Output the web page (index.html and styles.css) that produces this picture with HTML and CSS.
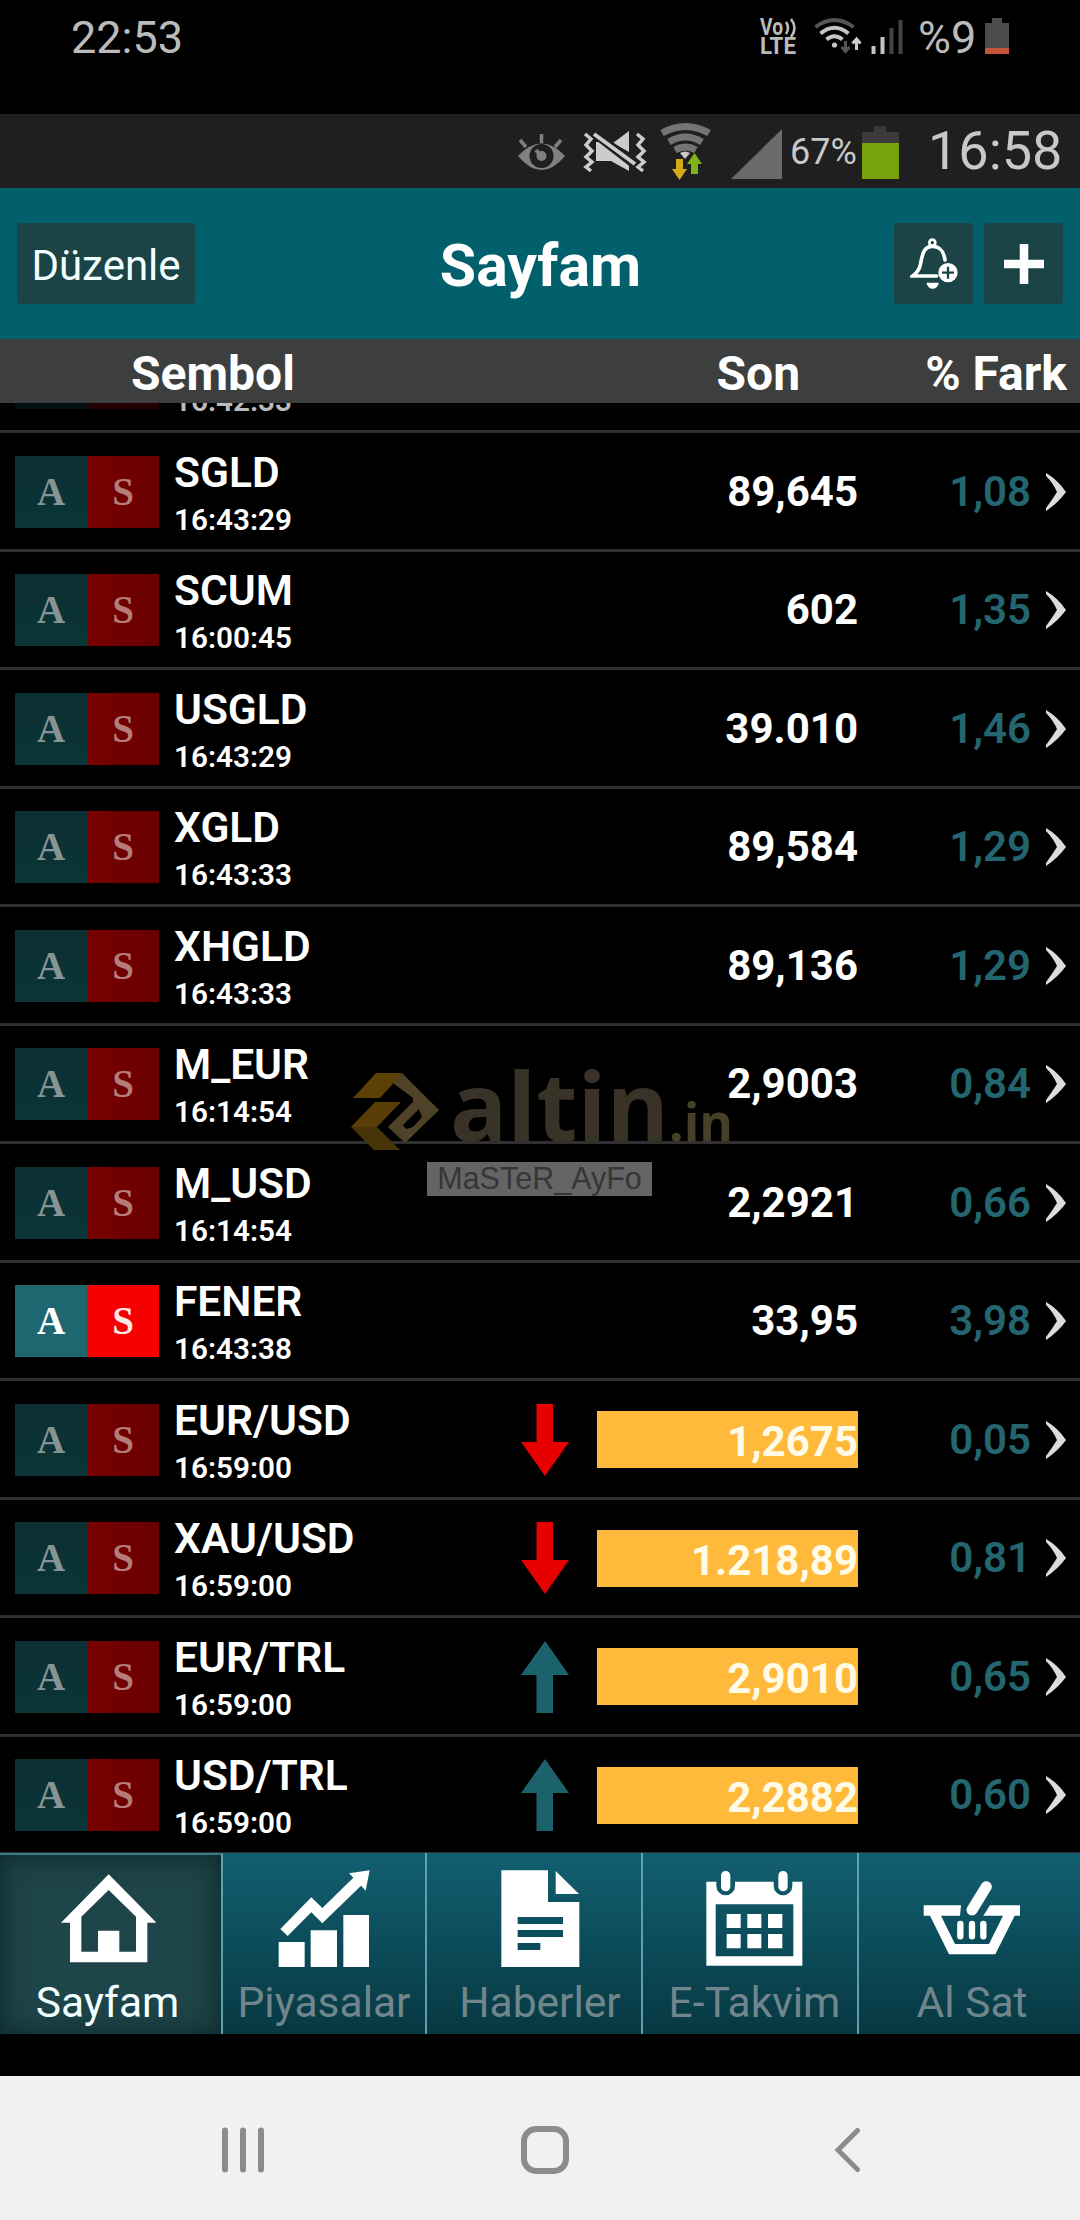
FILE: index.html
```html
<!DOCTYPE html>
<html lang="tr">
<head>
  <meta charset="UTF-8" />
  <meta name="viewport" content="width=device-width, initial-scale=1.0"/>
  <title>Sayfam</title>
  <link rel="stylesheet" href="styles.css">
</head>
<body>

  <!-- shared icons -->
  <svg class="sprite" xmlns="http://www.w3.org/2000/svg">
    <symbol id="chevron" viewBox="0 0 20 38">
      <path d="M0 0 Q12 7 20 19 Q12 30 0 38 L0 35 Q6 27 11 19 Q7 10 0 3 Z" fill="#dcdcdc"/>
    </symbol>
    <symbol id="down" viewBox="0 0 48 72">
      <path d="M15.500 0 H32 V38 H48 L24 72 L0 38 H15.500 Z" fill="#e60000"/>
    </symbol>
    <symbol id="up" viewBox="0 0 48 72">
      <path d="M24 0 L48 34 H32 V72 H15.500 V34 H0 Z" fill="#1c626d"/>
    </symbol>
  </svg>

  <div class="phone-status">
    <span class="clock">22:53</span>
    <svg class="phone-icons" width="160" height="60" viewBox="755 0 160 60">
      <text x="760" y="35" class="volte" textLength="23" lengthAdjust="spacingAndGlyphs">Vo</text>
      <path d="M786 22 Q790 28 786 34 M791 19 Q798 28 791 37" fill="none" stroke="#bbb" stroke-width="2.600"/>
      <text x="760" y="54" class="volte" textLength="36" lengthAdjust="spacingAndGlyphs">LTE</text>
      <g fill="none" stroke-width="4">
        <path d="M815.500 27 Q834.500 13 853.500 27" stroke="#555"/>
        <path d="M820.500 33.500 Q834.500 22 848.500 33.500" stroke="#c4c4c4"/>
        <path d="M826.500 39.500 Q834.500 33 842.500 39.500" stroke="#c4c4c4"/>
        <path d="M845.500 41 V51 M841.500 47 L845.500 51.500 L849.500 47" stroke="#555" stroke-width="3"/>
        <path d="M856.500 50 V40 M852.500 43.500 L856.500 39 L860.500 43.500" stroke="#ccc" stroke-width="3"/>
      </g>
      <circle cx="834.500" cy="45" r="2.600" fill="#c4c4c4"/>
      <path d="M871.500 46 h4 v8 h-4 Z M880.500 37 h4 v17 h-4 Z" fill="#c4c4c4"/>
      <path d="M889.500 28 h4 v26 h-4 Z M898.500 20 h4 v34 h-4 Z" fill="#444"/>
    </svg>
    <span class="battery-text">%9</span>
    <svg class="battery" width="24" height="36" viewBox="0 0 24 36">
      <path d="M7 0 H17 V5 H24 V36 H0 V5 H7 Z" fill="#4c4c4c"/>
      <path d="M0 30 H24 V36 H0 Z" fill="#c4543a"/>
    </svg>
  </div>

  <div class="app-status">
    <svg class="app-icons" width="270" height="74" viewBox="515 114 270 74">
      <path d="M518 156 Q541.500 131 565 156 Q541.500 184 518 156 Z" fill="#808080"/>
      <circle cx="541.500" cy="156" r="12" fill="#1f1f1f"/>
      <circle cx="541.500" cy="156" r="5" fill="#808080"/>
      <path d="M536 150 L541 156" stroke="#808080" stroke-width="4"/>
      <path d="M520 140 L526 147 M541.500 134 V143 M561 140 L555 147" stroke="#808080" stroke-width="3.500"/>
      <g stroke="#ccc" fill="none" stroke-width="3.500">
        <path d="M585 134 l6 5 l-5 6 l6 6 l-6 6 l6 5 l-6 5 l5 4"/>
        <path d="M637 134 l6 5 l-5 6 l6 6 l-6 6 l6 5 l-6 5 l5 4"/>
      </g>
      <path d="M596 142 H602 L629 164 V171 L611 161 H596 Z M613 143 L629 131 V152 Z" fill="#ccc"/>
      <path d="M594 133 L634 164" stroke="#1f1f1f" stroke-width="9"/>
      <path d="M594 134 L635 164" stroke="#ccc" stroke-width="4"/>
      <g fill="none" stroke="#747474" stroke-width="7">
        <path d="M662 133 Q685.500 120 709 133"/>
        <path d="M669 142 Q685.500 132 702 142"/>
        <path d="M675 150 Q685.500 144 696 150"/>
      </g>
      <path d="M680 153 Q685 150 690 153 L685 159 Z" fill="#d0c8c8"/>
      <path d="M676 159 H683 V169 H687 L679.500 180 L672 169 H676 Z" fill="#d3aa18"/>
      <path d="M694.500 153 L702 164 H698 V174 H691 V164 H687 Z" fill="#80b51a"/>
      <path d="M731 179 L782 129 V179 Z" fill="#6a6a6a"/>
    </svg>
    <span class="app-percent">67%</span>
    <svg class="app-battery" width="37" height="53" viewBox="0 0 37 53">
      <path d="M12 0 H24 V6 H37 V17 H0 V6 H12 Z" fill="#3a3a3a"/>
      <path d="M0 17 H37 V53 H0 Z" fill="#76a30c"/>
    </svg>
    <span class="app-clock">16:58</span>
  </div>

  <header class="header">
    <button class="btn btn-edit">Düzenle</button>
    <h1>Sayfam</h1>
    <div class="header-actions">
      <button class="btn btn-icon">
        <svg width="48" height="52" viewBox="0 0 144 156">
          <circle cx="67" cy="14" r="9" fill="none" stroke="#fff" stroke-width="8"/>
          <path d="M105 66 C101 40 92 25 67 25 C40 25 37 50 31 80 C28 96 22 104 8 114 H80" fill="none" stroke="#fff" stroke-width="11" stroke-linecap="round"/>
          <path d="M49 134 H87 Q82 152 68 152 Q54 152 49 134 Z" fill="#fff"/>
          <circle cx="114" cy="104" r="29" fill="#fff"/>
          <path d="M114 86 V122 M96 104 H132" stroke="#1c4345" stroke-width="7"/>
        </svg>
      </button>
      <button class="btn btn-icon">
        <svg width="40" height="40" viewBox="0 0 40 40">
          <path d="M20 0 V40 M0 20 H40" stroke="#fff" stroke-width="8.500"/>
        </svg>
      </button>
    </div>
  </header>

  <div class="columns">
    <span class="col-symbol">Sembol</span>
    <span class="col-last">Son</span>
    <span class="col-diff">% Fark</span>
  </div>

  <main class="list">
    <div class="row scrolled">
      <div class="badge"><b></b><b></b></div>
      <div class="symbol"><strong>&nbsp;</strong><small>16:42:33</small></div>
    </div>
    <div class="row">
      <div class="badge"><b>A</b><b>S</b></div>
      <div class="symbol"><strong>SGLD</strong><small>16:43:29</small></div>
      <span class="trend"></span>
      <span class="price">89,645</span>
      <span class="diff">1,08</span>
      <svg class="chevron"><use href="#chevron"/></svg>
    </div>
    <div class="row">
      <div class="badge"><b>A</b><b>S</b></div>
      <div class="symbol"><strong>SCUM</strong><small>16:00:45</small></div>
      <span class="trend"></span>
      <span class="price">602</span>
      <span class="diff">1,35</span>
      <svg class="chevron"><use href="#chevron"/></svg>
    </div>
    <div class="row">
      <div class="badge"><b>A</b><b>S</b></div>
      <div class="symbol"><strong>USGLD</strong><small>16:43:29</small></div>
      <span class="trend"></span>
      <span class="price">39.010</span>
      <span class="diff">1,46</span>
      <svg class="chevron"><use href="#chevron"/></svg>
    </div>
    <div class="row">
      <div class="badge"><b>A</b><b>S</b></div>
      <div class="symbol"><strong>XGLD</strong><small>16:43:33</small></div>
      <span class="trend"></span>
      <span class="price">89,584</span>
      <span class="diff">1,29</span>
      <svg class="chevron"><use href="#chevron"/></svg>
    </div>
    <div class="row">
      <div class="badge"><b>A</b><b>S</b></div>
      <div class="symbol"><strong>XHGLD</strong><small>16:43:33</small></div>
      <span class="trend"></span>
      <span class="price">89,136</span>
      <span class="diff">1,29</span>
      <svg class="chevron"><use href="#chevron"/></svg>
    </div>
    <div class="row">
      <div class="badge"><b>A</b><b>S</b></div>
      <div class="symbol"><strong>M_EUR</strong><small>16:14:54</small></div>
      <span class="trend"></span>
      <span class="price">2,9003</span>
      <span class="diff">0,84</span>
      <svg class="chevron"><use href="#chevron"/></svg>
    </div>
    <div class="row">
      <div class="badge"><b>A</b><b>S</b></div>
      <div class="symbol"><strong>M_USD</strong><small>16:14:54</small></div>
      <span class="trend"></span>
      <span class="price">2,2921</span>
      <span class="diff">0,66</span>
      <svg class="chevron"><use href="#chevron"/></svg>
    </div>
    <div class="row">
      <div class="badge active"><b>A</b><b>S</b></div>
      <div class="symbol"><strong>FENER</strong><small>16:43:38</small></div>
      <span class="trend"></span>
      <span class="price">33,95</span>
      <span class="diff">3,98</span>
      <svg class="chevron"><use href="#chevron"/></svg>
    </div>
    <div class="row">
      <div class="badge"><b>A</b><b>S</b></div>
      <div class="symbol"><strong>EUR/USD</strong><small>16:59:00</small></div>
      <svg class="trend"><use href="#down"/></svg>
      <span class="price changed">1,2675</span>
      <span class="diff">0,05</span>
      <svg class="chevron"><use href="#chevron"/></svg>
    </div>
    <div class="row">
      <div class="badge"><b>A</b><b>S</b></div>
      <div class="symbol"><strong>XAU/USD</strong><small>16:59:00</small></div>
      <svg class="trend"><use href="#down"/></svg>
      <span class="price changed">1.218,89</span>
      <span class="diff">0,81</span>
      <svg class="chevron"><use href="#chevron"/></svg>
    </div>
    <div class="row">
      <div class="badge"><b>A</b><b>S</b></div>
      <div class="symbol"><strong>EUR/TRL</strong><small>16:59:00</small></div>
      <svg class="trend"><use href="#up"/></svg>
      <span class="price changed">2,9010</span>
      <span class="diff">0,65</span>
      <svg class="chevron"><use href="#chevron"/></svg>
    </div>
    <div class="row">
      <div class="badge"><b>A</b><b>S</b></div>
      <div class="symbol"><strong>USD/TRL</strong><small>16:59:00</small></div>
      <svg class="trend"><use href="#up"/></svg>
      <span class="price changed">2,2882</span>
      <span class="diff">0,60</span>
      <svg class="chevron"><use href="#chevron"/></svg>
    </div>

    <!-- watermark over the list -->
    <div class="watermark">
      <svg width="400" height="100" viewBox="340 1060 400 100">
        <path d="M353 1098 L376 1073 H402 L391 1086 L380 1098 Z" fill="#5c4106"/>
        <path d="M351 1127 L375 1102 H401 L377 1127 Z" fill="#5a3e08"/>
        <path d="M351 1127 H377 L400 1150 H374 Z" fill="#483409"/>
        <path fill-rule="evenodd" d="M402 1073 L439 1110 L405 1143 L388 1127 L413 1102 L413 1098 L393 1083 Z M419 1109 L403 1125 L406 1129 L413 1127 L422 1117 Z" fill="#4f4228"/>
        <text x="450" y="1141" class="mark-name" textLength="219" lengthAdjust="spacingAndGlyphs">altin</text>
        <text x="669" y="1141" class="mark-tld" textLength="64" lengthAdjust="spacingAndGlyphs">.in</text>
      </svg>
      <span class="mark-user">MaSTeR_AyFo</span>
    </div>
  </main>

  <nav class="tabs">
    <a class="tab selected">
      <svg width="96" height="98" viewBox="178 90 288 294">
        <path fill-rule="evenodd" d="M324 103 L467 248 H440 V367 H208 V248 H181 Z M324 150 L242 230 V335 H292 V272 H356 V335 H406 V230 Z" fill="#fff"/>
      </svg>
      <span>Sayfam</span>
    </a>
    <a class="tab">
      <svg width="92" height="98" viewBox="834 90 276 294">
        <path d="M836 306 H914 V381 H836 Z M932 271 H1011 V381 H932 Z M1030 225 H1107 V381 H1030 Z" fill="#fff"/>
        <path d="M841 267 L934 172 L967 204 L1060 113 L1047 100 L1109 91 L1097 152 L1083 137 L967 250 L934 217 L863 288 Z" fill="#fff"/>
      </svg>
      <span>Piyasalar</span>
    </a>
    <a class="tab tab-news">
      <svg width="79" height="98" viewBox="212 90 237 294">
        <path fill-rule="evenodd" d="M213 91 H353 V186 H447 V381 H213 Z M262 231 V252 H398 V231 Z M262 270 V291 H398 V270 Z M262 309 V330 H330 V309 Z" fill="#fff"/>
        <path d="M376 93 L446 162 H376 Z" fill="#fff"/>
      </svg>
      <span>Haberler</span>
    </a>
    <a class="tab tab-calendar">
      <svg width="97" height="98" viewBox="833 90 291 294">
        <path fill-rule="evenodd" d="M834 125 H864 V138 A28 28 0 0 0 920 138 V125 H1036 V138 A28 28 0 0 0 1092 138 V125 H1122 V377 H834 Z M862 193 V349 H1095 V193 Z" fill="#fff"/>
        <path d="M892 107 V140 M1064 107 V140" stroke="#fff" stroke-width="28" stroke-linecap="round"/>
        <path d="M895 222 h42 v42 h-42 Z M957 222 h42 v42 h-42 Z M1019 222 h43 v42 h-43 Z M895 282 h42 v43 h-42 Z M957 282 h42 v43 h-42 Z M1019 282 h43 v43 h-43 Z" fill="#fff"/>
      </svg>
      <span>E-Takvim</span>
    </a>
    <a class="tab tab-trade">
      <svg width="98" height="98" viewBox="250 212 294 294">
        <path fill-rule="evenodd" d="M252 318 H364 L361 349 H304 L346 434 H448 L490 349 H431 L451 318 H541 V349 H525 L467 465 H328 L271 349 H252 Z" fill="#fff"/>
        <path d="M440 262 L397 332" stroke="#fff" stroke-width="33" stroke-linecap="round"/>
        <path d="M362 374 V411 M397 374 V411 M431 374 V411" stroke="#fff" stroke-width="19" stroke-linecap="round"/>
      </svg>
      <span>Al Sat</span>
    </a>
  </nav>

  <div class="system-nav">
    <svg width="640" height="50" viewBox="220 2125 640 50" fill="none" stroke="#8c8c8c">
      <path d="M225 2130.500 V2169.500 M243 2130.500 V2169.500 M261 2130.500 V2169.500" stroke-width="6" stroke-linecap="round"/>
      <rect x="524" y="2129" width="42" height="42" rx="12" stroke-width="6"/>
      <path d="M857.500 2130.500 L838 2150 L857.500 2169.500" stroke-width="5" stroke-linecap="round"/>
    </svg>
  </div>

</body>
</html>
```
FILE: styles.css
```css
* {
  margin: 0;
  padding: 0;
  box-sizing: border-box;
}

body {
  width: 1080px;
  height: 2220px;
  background: #000;
  color: #fff;
  font-family: Roboto, sans-serif;
  overflow: hidden;
  display: flex;
  flex-direction: column;
}

svg {
  display: block;
  flex: none;
}

.sprite {
  position: absolute;
  width: 0;
  height: 0;
}

/* phone status bar */
.phone-status {
  height: 114px;
  flex: none;
  display: flex;
  align-items: flex-start;
  padding: 0 71px 0 71px;
  color: #bbb;
  font-size: 45px;
  line-height: 75px;
}

.phone-icons {
  margin-left: auto;
}

.volte {
  font: 700 23px Roboto, sans-serif;
  fill: #bbb;
}

.battery-text {
  width: 70px;
  padding-left: 3px;
}

.battery {
  margin-top: 18px;
}

/* app status bar */
.app-status {
  height: 74px;
  flex: none;
  display: flex;
  background: #1f1f1f;
  color: #c8c8c8;
  padding-left: 515px;
}

.app-percent {
  width: 77px;
  padding-left: 5px;
  font-size: 36px;
  line-height: 77px;
}

.app-battery {
  margin-top: 12px;
}

.app-clock {
  padding-left: 29px;
  font-size: 54px;
  line-height: 73px;
}

/* header */
.header {
  height: 151px;
  flex: none;
  display: flex;
  align-items: center;
  justify-content: space-between;
  padding: 0 17px;
  background: #02606d;
}

h1 {
  font-size: 59px;
  font-weight: 700;
  margin-left: -8px;
  padding-top: 3px;
}

.btn {
  height: 81px;
  border: none;
  border-radius: 4px;
  background: #1c4345;
  color: #f2ffff;
  font-family: inherit;
  font-size: 42px;
}

.btn-edit {
  width: 178px;
  padding-top: 4px;
}

.header-actions {
  display: flex;
  gap: 11px;
}

.btn-icon {
  width: 79px;
  display: flex;
  align-items: center;
  justify-content: center;
}

.columns {
  height: 64px;
  flex: none;
  display: flex;
  padding: 0 13px 0 131px;
  background: #3d3e3e;
  font-size: 48px;
  font-weight: 700;
  line-height: 69px;
}

.col-last {
  margin-left: auto;
  margin-right: 125px;
}

/* price list */
.list {
  height: 1450px;
  flex: none;
  overflow: hidden;
  position: relative;
}

.row {
  height: 118.5px;
  display: grid;
  grid-template-columns: 144px 362px 76px 261px 173px 35px;
  align-items: center;
  padding: 2px 0 0 15px;
  border-bottom: 3px solid #303030;
}

/* row partly under the column bar */
.row.scrolled {
  margin-top: -88.5px;
  color: #bbb;
}

.scrolled .badge {
  opacity: 0.3;
}

.badge {
  display: flex;
  height: 72px;
}

.badge b {
  width: 72px;
  font-family: "Liberation Serif", serif;
  font-size: 39px;
  line-height: 71px;
  text-align: center;
  background: linear-gradient(#0c2f33, #0a3536);
  color: #869494;
}

.badge b + b {
  background: linear-gradient(90deg, #780000, #690000);
  color: #b57c78;
}

.badge.active b {
  background: #1f6770;
  color: #fff;
}

.badge.active b + b {
  background: #f60000;
  color: #ffe9e4;
}

.symbol {
  padding: 6px 0 0 15px;
}

.symbol strong {
  display: block;
  font-size: 42.5px;
  font-weight: 600;
  line-height: 50px;
}

.symbol small {
  display: block;
  font-size: 29.7px;
  font-weight: 600;
  line-height: 44px;
}

.trend {
  width: 48px;
  height: 72px;
}

.price {
  font-size: 42px;
  font-weight: 700;
  line-height: 58px;
  text-align: right;
}

.price.changed {
  background: #ffba3b;
  color: #fffbe6;
  height: 57px;
  line-height: 61px;
}

.diff {
  font-size: 42px;
  font-weight: 600;
  line-height: 58px;
  text-align: right;
  color: #246670;
}

.chevron {
  width: 20px;
  height: 38px;
  margin-left: 15px;
}

/* watermark */
.watermark {
  position: absolute;
  left: 340px;
  top: 657px;
}

.mark-name {
  font: 700 95px "Open Sans", sans-serif;
  fill: #393226;
}

.mark-tld {
  font: 700 52px "Open Sans", sans-serif;
  fill: #464029;
}

.mark-user {
  display: block;
  width: 225px;
  height: 34px;
  margin: 2px 0 0 87px;
  background: #646464;
  color: #363636;
  font-family: "Liberation Sans", sans-serif;
  font-size: 30.5px;
  line-height: 32px;
  text-align: center;
}

/* bottom tabs */
.tabs {
  height: 181px;
  flex: none;
  display: grid;
  grid-template-columns: 223px 204px 216px 216px 221px;
}

.tab {
  display: flex;
  flex-direction: column;
  align-items: center;
  padding-top: 17px;
  background: linear-gradient(#125f70, #0c4c5a 50%, #073842);
  border-right: 2px solid #5ca0ad;
  color: #71868c;
  font-size: 42.5px;
}

.tab:last-child {
  border-right: none;
}

.tab span {
  line-height: 50px;
  margin-top: 10px;
}

.tab-news {
  padding-left: 12px;
}

.tab-calendar {
  padding-left: 9px;
}

.tab-trade {
  padding-left: 5px;
}

.tab.selected {
  background: #1e4549;
  border-top: 2px solid #3e7a84;
  padding-top: 15px;
  padding-right: 6px;
  box-shadow: inset 0 0 30px #0a2629;
  color: #f4ffff;
}

/* android buttons */
.system-nav {
  height: 144px;
  flex: none;
  margin-top: 42px;
  padding: 49px 0 0 220px;
  background: #f1f1f1;
}
```
